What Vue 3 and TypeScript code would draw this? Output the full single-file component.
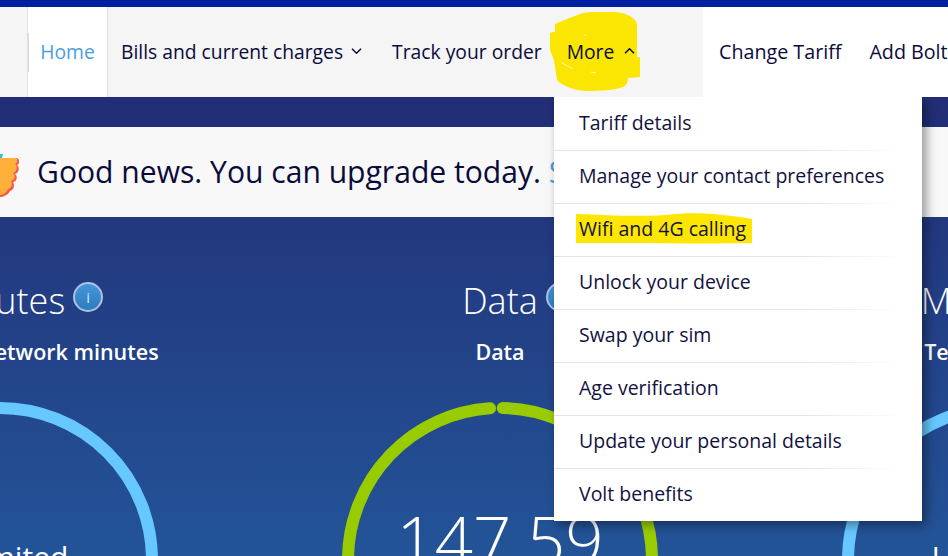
<script setup lang="ts">
interface Stat { title: string; sub: string; value: string; big: boolean; color: string; gap: boolean }
const stats: Stat[] = [
  { title: 'Minutes', sub: 'Inclusive any network minutes', value: 'Unlimited', big: false, color: '#66c8ff', gap: false },
  { title: 'Data', sub: 'Data', value: '147.59', big: true, color: '#99cc00', gap: true },
  { title: 'Messages', sub: 'Text messages', value: 'Unlimited', big: false, color: '#66c8ff', gap: false },
]
const menu: string[] = [
  'Tariff details',
  'Manage your contact preferences',
  'Wifi and 4G calling',
  'Unlock your device',
  'Swap your sim',
  'Age verification',
  'Update your personal details',
  'Volt benefits',
]
</script>

<template>
  <div class="page">
    <div class="topbar"></div>
    <header class="header">
      <nav class="nav-main">
        <a class="tab">Home</a>
        <a class="item bills">Bills and current charges
          <svg class="chev" width="11" height="6" viewBox="0 0 11 6"><path d="M1 .8l4.5 4.4L10 .8" /></svg>
        </a>
        <a class="item track">Track your order</a>
        <a class="item more">
          <svg class="blob" width="92" height="80" viewBox="0 0 92 80">
            <path d="M5 12C14 8 24 4 33 1C46 -1 62 -1 72 1C82 4 87 8 87 14V45H90V65L78 66C78 70 77 73 73 75C65 78 50 79 36 79C24 78 12 74 7 68L4 48L0 38V21C1 20 3 20 5 20Z" fill="#fae600" />
            <path d="M12 51L23 57M41 60L46 61M34 23L37 23" stroke="#fff8b0" stroke-width="1" fill="none" />
          </svg>
          <span class="more-label">More</span>
          <svg class="chev more-chev" width="11" height="6" viewBox="0 0 11 6"><path d="M1 5.2L5.5 .8 10 5.2" /></svg>
        </a>
      </nav>
      <nav class="nav-side">
        <a>Change Tariff</a>
        <a>Add Bolt Ons</a>
      </nav>
    </header>
    <ul class="dropdown">
      <li v-for="(m, i) in menu" :key="m" class="drop-item">
        <svg v-if="i === 2" class="mark" width="177" height="32" viewBox="0 0 177 32">
          <path d="M0 2C30 3 60 5 90 3C115 0 140 1 176 7V31C130 32 60 31 0 31Z" fill="#ffe600" />
        </svg>
        <span class="drop-text">{{ m }}</span>
      </li>
    </ul>
    <main class="main">
      <section class="banner">
        <svg class="hand" width="20" height="44" viewBox="0 0 20 44">
          <path d="M0 0h3l-1 4H0z" fill="#35c4c0" />
          <path d="M0 4H16C20 4 20 10 17 11C20 13 19 19 15 20C18 22 17 28 13 28C15 31 14 36 10 37C8 41 3 43 0 43Z" fill="#f5564e" />
          <path d="M0 4H15C18 4 18 9 15 10C18 12 17 18 13 19C16 21 15 26 11 27C13 30 12 34 8 35C6 39 3 41 0 41Z" fill="#ffb038" />
        </svg>
        <p class="banner-text">Good news. You can upgrade today. <span class="see">See</span></p>
      </section>
      <section class="stats">
        <article v-for="s in stats" :key="s.title" class="stat">
          <h2 class="title">
            {{ s.title }}
            <span class="info">i</span>
          </h2>
          <p class="sub">{{ s.sub }}</p>
          <div class="ring">
            <svg width="316" height="316" viewBox="0 0 316 316">
              <g transform="rotate(-90 158 158)">
                <circle
                  cx="158" cy="158" r="152" fill="none" :stroke="s.color" stroke-width="12"
                  :stroke-linecap="s.gap ? 'round' : 'butt'"
                  :stroke-dasharray="s.gap ? '942 1000' : undefined"
                  :transform="s.gap ? 'rotate(1 158 158)' : undefined"
                />
              </g>
            </svg>
            <div class="value" :class="{ big: s.big }">{{ s.value }}</div>
          </div>
        </article>
      </section>
    </main>
  </div>
</template>

<style>
html, body { margin: 0; background: #fff; }
</style>

<style scoped>
.page {
  position: relative;
  width: 948px;
  height: 556px;
  overflow: hidden;
  font-family: "Open Sans", "Noto Sans", "Liberation Sans", sans-serif;
  color: #0b0b3b;
}
.topbar { height: 7px; background: #001ea0; }
.header {
  position: relative;
  z-index: 3;
  display: flex;
  height: 90px;
  background: #fff;
  font-size: 19.3px;
  white-space: nowrap;
}
.nav-main {
  flex: none;
  width: 703px;
  box-sizing: border-box;
  display: flex;
  align-items: stretch;
  padding-left: 27px;
  background: #f5f5f5;
}
.nav-main a, .nav-side a { display: flex; align-items: center; padding-bottom: 2px; }
.tab {
  position: relative;
  box-sizing: border-box;
  width: 81px;
  justify-content: center;
  background: #fff;
  border-left: 1px solid #e2e2e2;
  border-right: 1px solid #e2e2e2;
  color: #4a9ede;
}
.tab::before {
  content: "";
  position: absolute;
  left: 0;
  top: 26px;
  width: 1px;
  height: 39px;
  background: #dcdcdc;
}
.item { padding: 0 13px; }
.bills { padding-right: 15px; }
.track { padding-left: 15px; }
.chev { margin-left: 8px; fill: none; stroke: #0b0b3b; stroke-width: 1.5; }
.more { position: relative; padding-left: 12px; }
.more-label, .more-chev { position: relative; }
.more-chev { margin-left: 10px; }
.blob { position: absolute; left: -5px; top: 5px; }
.nav-side {
  display: flex;
  gap: 28px;
  padding-left: 16px;
  font-size: 19.7px;
}
.dropdown {
  position: absolute;
  z-index: 2;
  left: 554px;
  top: 97px;
  width: 368px;
  height: 424px;
  margin: 0;
  padding: 0;
  list-style: none;
  background: #fff;
  box-shadow: 4px 4px 10px rgba(0, 0, 0, 0.4);
  font-size: 19.5px;
  color: #12123f;
}
.drop-item {
  position: relative;
  box-sizing: border-box;
  height: 53px;
  padding: 0 0 2px 25px;
  display: flex;
  align-items: center;
  white-space: nowrap;
}
.drop-item:not(:last-child)::after {
  content: "";
  position: absolute;
  left: 0;
  bottom: -1px;
  width: 352px;
  height: 1px;
  background: linear-gradient(to right, #e4e4e4 0%, #e4e4e4 70%, rgba(228, 228, 228, 0) 100%);
}
.mark { position: absolute; left: 22px; top: 9px; }
.drop-text { position: relative; }
.main {
  height: 459px;
  padding-top: 30px;
  box-sizing: border-box;
  background: linear-gradient(to bottom, #222d75 0%, #235498 100%);
}
.banner {
  display: flex;
  align-items: center;
  height: 90px;
  box-sizing: border-box;
  padding-bottom: 2px;
  background: #f8f8f8;
}
.hand { flex: none; width: 20px; margin-right: 17px; margin-top: 10px; }
.banner-text {
  margin: 0;
  font-size: 30.1px;
  white-space: nowrap;
}
.see { color: #4a9ede; }
.stats {
  display: grid;
  grid-template-columns: repeat(3, 500px);
  margin-left: -250px;
  width: 1500px;
  color: #fff;
  text-align: center;
}
.stat { display: flex; flex-direction: column; align-items: center; }
.title {
  position: relative;
  margin: 59px 0 0;
  height: 50px;
  line-height: 50px;
  font-size: 36px;
  font-weight: 300;
}
.info {
  position: absolute;
  left: calc(100% + 8px);
  top: 6px;
  width: 30px;
  height: 30px;
  box-sizing: border-box;
  border-radius: 50%;
  border: 2px solid #a9c3e0;
  background: linear-gradient(to bottom, #4596d8, #2d7cbd);
  font-size: 15px;
  font-weight: 400;
  line-height: 26px;
  color: #cfe4f5;
}
.sub {
  margin: 11px 0 0;
  height: 30px;
  line-height: 30px;
  font-size: 21.5px;
  font-weight: 600;
  white-space: nowrap;
}
.ring { position: relative; margin-top: 35px; width: 316px; height: 316px; }
.ring svg { display: block; }
.value {
  position: absolute;
  left: 0;
  right: 0;
  top: 133px;
  font-size: 30px;
  line-height: 44px;
  font-weight: 400;
}
.value.big {
  top: 97px;
  font-size: 67px;
  line-height: 80px;
  font-weight: 300;
}
</style>
